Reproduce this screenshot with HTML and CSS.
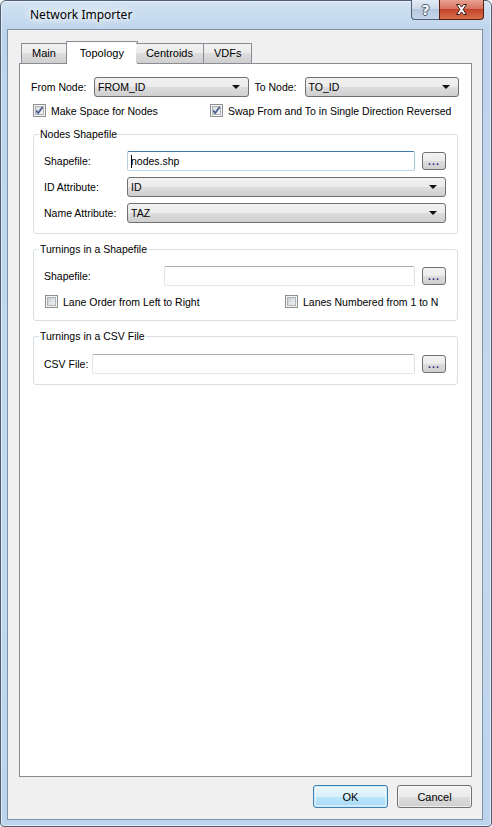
FILE: index.html
```html
<!DOCTYPE html>
<html lang="en">
  <head>
    <meta charset="UTF-8" />
    <title>Network Importer</title>
    <link rel="stylesheet" href="styles.css">
  </head>
  <body>
    <div class="window">
      <div class="titlebar">
        <span class="title">Network Importer</span>
        <div class="caption-buttons">
          <span class="cap-btn help">?</span>
          <span class="cap-btn close">
            <svg width="13" height="11" viewBox="0 0 13 11">
              <path d="M1.5 0.5h3l2 2.6 2-2.6h3l-3.4 5 3.4 5h-3l-2-2.6-2 2.6h-3l3.4-5z" fill="#fff" stroke="#3b1a14" stroke-width="1" stroke-linejoin="round" />
            </svg>
          </span>
        </div>
      </div>

      <div class="client">
        <div class="tabs">
          <span class="tab">Main</span>
          <span class="tab active">Topology</span>
          <span class="tab">Centroids</span>
          <span class="tab">VDFs</span>
        </div>

        <div class="tab-panel">
          <div class="node-row">
            <span class="label">From Node:</span>
            <div class="combo node-combo">FROM_ID<span class="arrow"></span></div>
            <span class="label to-label">To Node:</span>
            <div class="combo node-combo">TO_ID<span class="arrow"></span></div>
          </div>

          <div class="check-row top-checks">
            <label class="check"><span class="box checked"></span>Make Space for Nodes</label>
            <label class="check swap"><span class="box checked"></span>Swap From and To in Single Direction Reversed</label>
          </div>

          <fieldset class="group">
            <legend>Nodes Shapefile</legend>
            <div class="fields nodes-fields">
              <span class="label">Shapefile:</span>
              <div class="textbox focused"><span class="caret"></span>nodes.shp</div>
              <span class="browse">...</span>
              <span class="label">ID Attribute:</span>
              <div class="combo wide">ID<span class="arrow"></span></div>
              <span class="label">Name Attribute:</span>
              <div class="combo wide">TAZ<span class="arrow"></span></div>
            </div>
          </fieldset>

          <fieldset class="group">
            <legend>Turnings in a Shapefile</legend>
            <div class="fields turn-fields">
              <span class="label">Shapefile:</span>
              <div class="textbox"></div>
              <span class="browse">...</span>
            </div>
            <div class="check-row group-checks">
              <label class="check lane-order"><span class="box"></span>Lane Order from Left to Right</label>
              <label class="check"><span class="box"></span>Lanes Numbered from 1 to N</label>
            </div>
          </fieldset>

          <fieldset class="group">
            <legend>Turnings in a CSV File</legend>
            <div class="fields csv-fields">
              <span class="label">CSV File:</span>
              <div class="textbox"></div>
              <span class="browse">...</span>
            </div>
          </fieldset>
        </div>

        <div class="footer">
          <button class="btn default">OK</button>
          <button class="btn">Cancel</button>
        </div>
      </div>
    </div>
  </body>
</html>
```

FILE: styles.css
```css
* {
  box-sizing: border-box;
}

body {
  margin: 0;
  background: #fff;
  font-family: "Liberation Sans", Arial, sans-serif;
  font-size: 10.5px;
  color: #000;
}

/* window frame */

.window {
  width: 492px;
  height: 827px;
  display: flex;
  flex-direction: column;
  border: 1px solid #4e5f73;
  border-radius: 6px 6px 4px 4px;
  background: linear-gradient(#d2e3f4, #bdd4ec 30px, #c3d9ef 60%, #bcd4ec);
  box-shadow: inset 0 0 0 1px rgba(255, 255, 255, 0.55);
}

.titlebar {
  height: 28px;
  flex-shrink: 0;
  display: flex;
  justify-content: space-between;
  padding-left: 29px;
}

.title {
  font-family: "Noto Sans", "Liberation Sans", sans-serif;
  font-size: 12px;
  line-height: 28px;
  color: #000;
  text-shadow: 0 0 6px #fff, 0 0 10px #fff, 0 0 14px rgba(255, 255, 255, 0.9);
}

.caption-buttons {
  display: flex;
  align-self: flex-start;
  margin-top: -1px;
  margin-right: 7px;
}

.cap-btn {
  height: 20px;
  display: flex;
  align-items: center;
  justify-content: center;
  border: 1px solid #4f5d6f;
  border-top: none;
}

.cap-btn.help {
  width: 28px;
  border-right: none;
  border-radius: 0 0 0 4px;
  background: linear-gradient(#e3ecf6, #ccdaea 45%, #b5c7dc 50%, #c4d6ea);
  font-family: "DejaVu Sans", sans-serif;
  font-size: 14px;
  font-weight: bold;
  color: #fff;
  text-shadow: -1px 0 #4a5b72, 1px 0 #4a5b72, 0 -1px #4a5b72, 0 1px #4a5b72;
}

.cap-btn.close {
  width: 45px;
  border-color: #5b1e12;
  border-radius: 0 0 4px 0;
  background: linear-gradient(#e8a294, #d6735f 45%, #c4452c 50%, #d5704a);
}

.client {
  flex: 1;
  display: flex;
  flex-direction: column;
  margin: 0 8px 6px 6px;
  padding: 11px 10px 0 11px;
  background: #f0f0f0;
  border: 1px solid #7f92a8;
}

/* tabs */

.tabs {
  display: flex;
  padding-left: 2px;
  height: 22px;
  position: relative;
  z-index: 1;
}

.tab {
  height: 20px;
  margin-top: 2px;
  padding: 0 10px;
  line-height: 19px;
  font-size: 11px;
  border: 1px solid #898c95;
  border-bottom: none;
  border-left: none;
  background: linear-gradient(#f2f2f2, #ebebeb 50%, #dddddd 50%, #cfcfcf);
}

.tab:first-child {
  border-left: 1px solid #898c95;
}

.tab.active {
  height: 23px;
  margin: 0 -2px 0 -1px;
  padding: 0 13px;
  line-height: 22px;
  border-left: 1px solid #898c95;
  background: #fff;
}

.tab-panel {
  flex: 1;
  background: #fff;
  border: 1px solid #898c95;
  padding: 13px 13px 0 13px;
}

/* common controls */

.label {
  white-space: nowrap;
}

.combo {
  height: 20px;
  display: flex;
  align-items: center;
  padding-left: 3px;
  border: 1px solid #707070;
  border-radius: 3px;
  background: linear-gradient(#f2f2f2, #ebebeb 50%, #dddddd 50%, #cfcfcf);
}

.combo .arrow {
  margin-left: auto;
  margin-right: 8px;
  border-left: 4px solid transparent;
  border-right: 4px solid transparent;
  border-top: 4px solid #111;
}

.textbox {
  height: 20px;
  display: flex;
  align-items: center;
  padding-left: 3px;
  background: #fff;
  border: 1px solid;
  border-color: #abadb3 #dbdfe6 #e3e9ef #e2e3ea;
  border-radius: 2px;
}

.textbox.focused {
  border-color: #3d7bad #a4c9e3 #b7d9ed #b5cfe7;
}

.caret {
  width: 1px;
  height: 13px;
  background: #000;
  margin-right: -1px;
}

.browse {
  width: 24px;
  height: 18px;
  align-self: center;
  text-align: center;
  line-height: 16px;
  letter-spacing: 1px;
  font-weight: bold;
  color: #24247a;
  border: 1px solid #707070;
  border-radius: 3px;
  background: linear-gradient(#f2f2f2, #ebebeb 50%, #dddddd 50%, #cfcfcf);
}

.check {
  display: flex;
  align-items: center;
  gap: 5px;
  white-space: nowrap;
}

.box {
  width: 13px;
  height: 13px;
  flex-shrink: 0;
  border: 1px solid #8e8f8f;
  background: #fff;
  box-shadow: inset 0 0 0 1px #f4f4f4, inset 0 0 0 2px #aeb3b9;
  background-image: linear-gradient(135deg, #c9ccd1, #f3f3f3);
  background-size: 7px 7px;
  background-position: 2px 2px;
  background-repeat: no-repeat;
}

.box.checked {
  background: url("data:image/svg+xml,%3Csvg xmlns='http://www.w3.org/2000/svg' width='11' height='11'%3E%3Cpath d='M2 5.5l2.2 2.6L8.8 1.8' fill='none' stroke='%234c5f93' stroke-width='1.8'/%3E%3C/svg%3E") center / 11px 11px no-repeat, linear-gradient(135deg, #d4d7dc, #f8f8f8);
}

/* top rows */

.node-row {
  display: flex;
  align-items: center;
  margin: 0 -1px 0 -2px;
}

.node-row .label {
  width: 63px;
}

.node-row .to-label {
  width: 50px;
  margin-left: 6px;
}

.node-combo {
  flex: 1;
}

.top-checks {
  display: flex;
  margin-top: 7px;
  height: 13px;
}

.top-checks .check {
  width: 177px;
}

.swap {
  flex: 1;
}

/* group boxes */

.group {
  margin: 10px 0 0;
  padding: 0 11px 10px 10px;
  border: 1px solid #d5dfe5;
  border-radius: 3px;
}

.group + .group {
  margin-top: 8px;
}

.group legend {
  margin-left: -5px;
  padding: 0 1px;
  line-height: 14px;
}

.fields {
  display: grid;
  grid-template-columns: 76px 1fr 24px;
  column-gap: 7px;
  row-gap: 6px;
  align-items: center;
  margin-top: 10px;
}

.fields .combo {
  grid-column: span 2;
}

.turn-fields {
  grid-template-columns: 113px 1fr 24px;
  margin-top: 10px;
}

.csv-fields {
  grid-template-columns: 41px 1fr 24px;
  margin-top: 11px;
}

.group-checks {
  display: flex;
  margin: 9px 0 2px 1px;
}

.lane-order {
  width: 240px;
}

/* dialog buttons */

.footer {
  display: flex;
  justify-content: flex-end;
  gap: 9px;
  padding: 8px 0 11px;
}

.btn {
  width: 75px;
  height: 23px;
  font-family: inherit;
  font-size: 11px;
  color: #000;
  border: 1px solid #707070;
  border-radius: 3px;
  background: linear-gradient(#f2f2f2, #ebebeb 50%, #dddddd 50%, #cfcfcf);
  box-shadow: inset 0 0 0 1px rgba(255, 255, 255, 0.7);
}

.btn.default {
  border-color: #3c7fb1;
  background: linear-gradient(#eaf6fd, #d9f0fc 50%, #bee6fd 50%, #a7d9f5);
  box-shadow: inset 0 0 0 1px #cdeafc, inset 0 0 0 2px rgba(255, 255, 255, 0.5);
}
```
